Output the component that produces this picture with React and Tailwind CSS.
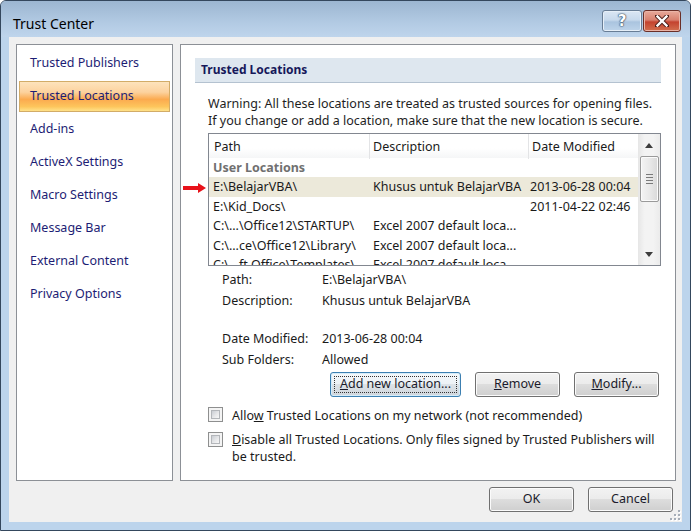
import React from "react";

const NAV = [
  "Trusted Publishers",
  "Trusted Locations",
  "Add-ins",
  "ActiveX Settings",
  "Macro Settings",
  "Message Bar",
  "External Content",
  "Privacy Options",
];

const ROWS = [
  { path: "E:\\BelajarVBA\\", desc: "Khusus untuk BelajarVBA", date: "2013-06-28 00:04", selected: true },
  { path: "E:\\Kid_Docs\\", desc: "", date: "2011-04-22 02:46" },
  { path: "C:\\...\\Office12\\STARTUP\\", desc: "Excel 2007 default loca...", date: "" },
  { path: "C:\\...ce\\Office12\\Library\\", desc: "Excel 2007 default loca...", date: "" },
  { path: "C:\\...ft Office\\Templates\\", desc: "Excel 2007 default loca...", date: "" },
];

function Button({ children, width, focused }) {
  return (
    <div
      className={`relative h-[25px] ${width} rounded-[3px] border flex items-center justify-center text-[12.5px] text-[#1b1b2b] ${
        focused
          ? "border-[#3c7fb1] shadow-[inset_0_0_0_1px_#d4ecfa] bg-[linear-gradient(to_bottom,#f4f8fb_0%,#ecf1f5_50%,#dde3e8_50%,#d0d6dc_100%)]"
          : "border-[#707070] shadow-[inset_0_0_0_1px_#fbfbfb] bg-[linear-gradient(to_bottom,#f2f2f2_0%,#ebebeb_50%,#dddddd_50%,#cfcfcf_100%)]"
      }`}
    >
      {focused && <span className="absolute inset-[3px] border border-dotted border-[#333]" />}
      <span className="relative">{children}</span>
    </div>
  );
}

function Checkbox() {
  return (
    <span className="w-[15px] h-[15px] shrink-0 border border-[#8e8f8f] bg-[#f4f4f4] p-[2px]">
      <span className="block w-full h-full border border-[#b3b6ba] bg-[linear-gradient(135deg,#c9cdd3_0%,#e6e7e9_55%,#f7f7f7_100%)]" />
    </span>
  );
}

function Grip() {
  return (
    <svg width="12" height="12" viewBox="0 0 12 12" className="block">
      {[
        [9, 1],
        [5, 5],
        [9, 5],
        [1, 9],
        [5, 9],
        [9, 9],
      ].map(([x, y], i) => (
        <g key={i}>
          <rect x={x + 1} y={y + 1} width="2" height="2" fill="#ffffff" />
          <rect x={x} y={y} width="2" height="2" fill="#a5adb8" />
        </g>
      ))}
    </svg>
  );
}

export default function App() {
  return (
    <div className="w-[691px] h-[531px] bg-white">
      <div className="w-[691px] h-[531px] flex flex-col border border-[#34475d] rounded-t-[6px] bg-[#bcd4ec] overflow-hidden font-['Noto_Sans',sans-serif] text-[12.5px] text-[#1a1a1a]">
        {/* title bar */}
        <div className="h-[36px] shrink-0 flex items-start pl-[12px] pr-[9px] bg-[linear-gradient(to_bottom,#9cb6d1_0%,#b2cae3_60%,#bfd5ec_100%)]">
          <span className="mt-[12px] text-[14px] leading-[22px] text-black">Trust Center</span>
          <div className="ml-auto mt-[9px] flex gap-[1px]">
            <div className="w-[40px] h-[22px] rounded-[3px] border border-[#687d95] shadow-[inset_0_0_0_1px_#e6eff8] bg-[linear-gradient(to_bottom,#dbe7f4_0%,#c7d9ec_45%,#aac4df_55%,#bed4ea_100%)] flex items-center justify-center">
              <span className="text-[15px] leading-none font-bold font-['DejaVu_Sans',sans-serif] text-white [text-shadow:0_0_1px_#33475e,0_0_1px_#33475e,0_0_2px_#33475e]">
                ?
              </span>
            </div>
            <div className="w-[38px] h-[22px] rounded-[3px] border border-[#6a2f28] shadow-[inset_0_0_0_1px_#eab4a7] bg-[linear-gradient(to_bottom,#e8aa9b_0%,#d8806e_45%,#c4432f_55%,#d2704f_100%)] flex items-center justify-center">
              <svg width="14" height="12" viewBox="0 0 14 12">
                <path d="M2 1 L12 11 M12 1 L2 11" stroke="#4a1e19" strokeWidth="4.2" strokeLinecap="square" />
                <path d="M2.5 1.5 L11.5 10.5 M11.5 1.5 L2.5 10.5" stroke="#ffffff" strokeWidth="2.4" strokeLinecap="square" />
              </svg>
            </div>
          </div>
        </div>

        {/* client area */}
        <div className="relative flex-1 mx-[8px] mb-[8px] bg-[#f0f0f0] flex flex-col px-[7px] pt-[7px]">
          <div className="flex gap-[7px] h-[437px]">
            {/* category list */}
            <div className="w-[157px] shrink-0 border border-[#8c9096] bg-white flex flex-col gap-[2px] pt-[3px] px-[2px]">
              {NAV.map((n) => (
                <div
                  key={n}
                  className={`h-[31px] flex items-center pl-[10px] text-[#1d1d74] ${
                    n === "Trusted Locations"
                      ? "border border-[#d2ac68] bg-[linear-gradient(to_bottom,#fde3bc_0%,#fcd29e_35%,#fbaa4f_60%,#fdc55c_85%,#ffe28a_100%)]"
                      : "border border-transparent"
                  }`}
                >
                  {n}
                </div>
              ))}
            </div>

            {/* settings panel */}
            <div className="relative flex-1 border border-[#8c9096] bg-white px-[14px] pt-[13px]">
              <div className="h-[25px] bg-[#dee7ef] border-b border-[#b4c2d0] flex items-center pl-[6px] text-[12px] font-bold text-[#16185a]">
                Trusted Locations
              </div>

              <div className="pl-[13px]">
                <p className="mt-[12px] leading-[17px] text-[#1e1e1e] whitespace-nowrap">
                  Warning: All these locations are treated as trusted sources for opening files.
                  <br />
                  If you change or add a location, make sure that the new location is secure.
                </p>

                {/* locations list view */}
                <div className="mt-[4px] h-[133px] border border-[#828790] bg-white flex overflow-hidden">
                  <div className="flex-1 flex flex-col overflow-hidden">
                    <div className="h-[24px] shrink-0 grid grid-cols-[161px_159px_109px] bg-[linear-gradient(to_bottom,#ffffff_0%,#ffffff_60%,#f5f6f7_100%)]">
                      <div className="border-r border-[#e3e4e6] pl-[5px] leading-[25px]">Path</div>
                      <div className="border-r border-[#e3e4e6] pl-[3px] leading-[25px]">Description</div>
                      <div className="pl-[3px] leading-[25px]">Date Modified</div>
                    </div>
                    <div className="h-[19px] shrink-0 leading-[20px] pl-[4px] font-bold text-[#707070]">User Locations</div>
                    {ROWS.map((r) => (
                      <div
                        key={r.path}
                        className={`h-[19.5px] shrink-0 grid grid-cols-[161px_159px_109px] leading-[20px] whitespace-nowrap ${
                          r.selected ? "bg-[#ece9da]" : ""
                        }`}
                      >
                        <div className="pl-[4px] overflow-hidden">{r.path}</div>
                        <div className="pl-[3px] overflow-hidden">{r.desc}</div>
                        <div className="pl-[1px] overflow-hidden">{r.date}</div>
                      </div>
                    ))}
                  </div>
                  {/* vertical scrollbar */}
                  <div className="w-[22px] shrink-0 bg-[linear-gradient(to_right,#e6e6e6,#f3f3f3_30%,#f3f3f3_70%,#ebebeb)] flex flex-col items-center">
                    <div className="h-[22px] w-full flex items-center justify-center">
                      <svg width="8" height="5" viewBox="0 0 8 5">
                        <path d="M4 0 L8 5 L0 5 Z" fill="#3d3d3d" />
                      </svg>
                    </div>
                    <div className="w-[19px] h-[46px] rounded-[2px] border border-[#9a9a9a] shadow-[inset_0_0_0_1px_#fbfbfb] bg-[linear-gradient(to_right,#f4f4f4,#e9e9e9_50%,#d9d9d9)] flex flex-col items-center justify-center gap-[2px]">
                      {[0, 1, 2, 3].map((i) => (
                        <span key={i} className="block w-[7px] h-[1px] bg-[#7a7a7a]" />
                      ))}
                    </div>
                    <div className="mt-auto h-[22px] w-full flex items-center justify-center">
                      <svg width="8" height="5" viewBox="0 0 8 5">
                        <path d="M0 0 L8 0 L4 5 Z" fill="#3d3d3d" />
                      </svg>
                    </div>
                  </div>
                </div>

                {/* details of the selected location */}
                <div className="mt-[4px] pl-[14px]">
                  {[
                    ["Path:", "E:\\BelajarVBA\\", "h-[21px]"],
                    ["Description:", "Khusus untuk BelajarVBA", "h-[20px]"],
                    null,
                    ["Date Modified:", "2013-06-28 00:04", "h-[21px]"],
                    ["Sub Folders:", "Allowed", "h-[20px]"],
                  ].map((row, i) =>
                    row ? (
                      <div key={i} className={`${row[2]} flex items-center`}>
                        <span className="w-[100px] shrink-0">{row[0]}</span>
                        <span>{row[1]}</span>
                      </div>
                    ) : (
                      <div key={i} className="h-[18px]" />
                    )
                  )}
                </div>

                <div className="mt-[2px] flex justify-end gap-[14px] pr-[2px]">
                  <Button width="w-[131px]" focused>
                    <span className="underline">A</span>dd new location...
                  </Button>
                  <Button width="w-[85px]">
                    <span className="underline">R</span>emove
                  </Button>
                  <Button width="w-[85px]">
                    <span className="underline">M</span>odify...
                  </Button>
                </div>

                <div className="mt-[10px] flex items-start gap-[9px]">
                  <Checkbox />
                  <span className="leading-[17px] -mt-[0.5px]">
                    Allo<span className="underline">w</span> Trusted Locations on my network (not recommended)
                  </span>
                </div>
                <div className="mt-[8px] flex items-start gap-[9px]">
                  <Checkbox />
                  <span className="leading-[17px] -mt-[0.5px] whitespace-nowrap">
                    <span className="underline">D</span>isable all Trusted Locations. Only files signed by Trusted Publishers will
                    <br />
                    be trusted.
                  </span>
                </div>
              </div>

              {/* red pointer arrow on the selected row */}
              <svg className="absolute left-[2px] top-[138px]" width="24" height="10" viewBox="0 0 24 10">
                <path d="M0 3 H15 V0 L23 5 L15 10 V7 H0 Z" fill="#e8121a" />
              </svg>
            </div>
          </div>

          <div className="mt-[6px] flex justify-end gap-[14px] pr-[2px]">
            <Button width="w-[85px]">OK</Button>
            <Button width="w-[85px]">Cancel</Button>
          </div>

          <div className="absolute right-[1px] bottom-[1px]">
            <Grip />
          </div>
        </div>
      </div>
    </div>
  );
}
